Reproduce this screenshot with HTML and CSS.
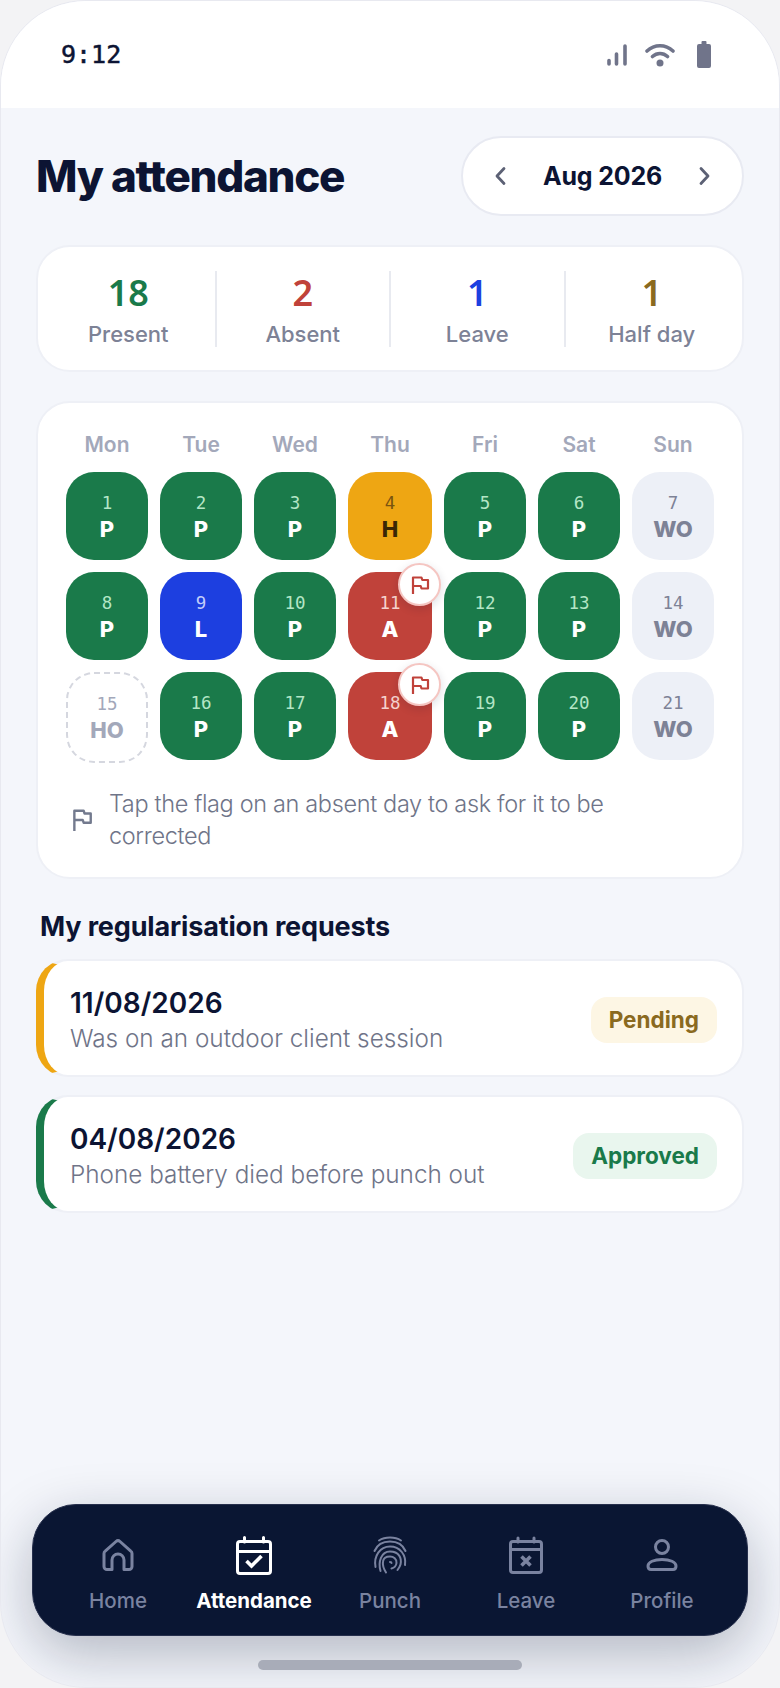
FILE: index.html
```html
<!DOCTYPE html>
<html lang="en">
<head>
    <meta charset="UTF-8">
    <meta name="viewport" content="width=device-width, initial-scale=1.0">
    <title>My attendance</title>
    <link rel="stylesheet" href="styles.css">
</head>
<body>
<div class="phone">
    <div class="status">
        <span class="time">9:12</span>
        <div class="status-icons">
            <svg class="ic-signal" width="20" height="22" viewBox="0 0 20 22"><path d="M2 16.500v3.500M9.500 10v10M18 2v18" stroke="#70748a" stroke-width="3.600" stroke-linecap="round" fill="none"/></svg>
            <svg class="ic-wifi" width="30" height="24" viewBox="0 0 30 24"><path d="M2 8C9.500 1 20.500 1 28 8M7.500 13.500C12 9.500 18 9.500 22.500 13.500" stroke="#70748a" stroke-width="3.600" stroke-linecap="round" fill="none"/><circle cx="15" cy="20" r="3.500" fill="#70748a"/></svg>
            <svg width="14" height="27" viewBox="0 0 14 27"><path d="M4.500 1a1 1 0 0 1 1-1h3a1 1 0 0 1 1 1v2H12a2 2 0 0 1 2 2v20a2 2 0 0 1-2 2H2a2 2 0 0 1-2-2V5a2 2 0 0 1 2-2h2.500z" fill="#70748a"/></svg>
        </div>
    </div>

    <main class="content">
        <header class="top">
            <h1>My attendance</h1>
            <div class="month">
                <svg width="16" height="22" viewBox="0 0 16 22"><path d="M12 3.500 5 11l7 7.500" stroke="#5c6175" stroke-width="2.800" stroke-linecap="round" stroke-linejoin="round" fill="none"/></svg>
                <span>Aug 2026</span>
                <svg width="16" height="22" viewBox="0 0 16 22"><path d="m4 3.500 7 7.500-7 7.500" stroke="#5c6175" stroke-width="2.800" stroke-linecap="round" stroke-linejoin="round" fill="none"/></svg>
            </div>
        </header>

        <section class="card summary">
            <div class="stat"><b class="green">18</b><span>Present</span></div>
            <div class="stat"><b class="red">2</b><span>Absent</span></div>
            <div class="stat"><b class="blue">1</b><span>Leave</span></div>
            <div class="stat"><b class="brown">1</b><span>Half day</span></div>
        </section>

        <section class="card calendar">
            <div class="grid">
                <div class="dow">Mon</div><div class="dow">Tue</div><div class="dow">Wed</div><div class="dow">Thu</div><div class="dow">Fri</div><div class="dow">Sat</div><div class="dow">Sun</div>

                <div class="day present"><small>1</small><b>P</b></div>
                <div class="day present"><small>2</small><b>P</b></div>
                <div class="day present"><small>3</small><b>P</b></div>
                <div class="day half"><small>4</small><b>H</b></div>
                <div class="day present"><small>5</small><b>P</b></div>
                <div class="day present"><small>6</small><b>P</b></div>
                <div class="day off"><small>7</small><b>WO</b></div>

                <div class="day present"><small>8</small><b>P</b></div>
                <div class="day leave"><small>9</small><b>L</b></div>
                <div class="day present"><small>10</small><b>P</b></div>
                <div class="day absent"><small>11</small><b>A</b>
                    <span class="flag"><svg width="20" height="20" viewBox="0 0 20 20"><path d="M3 19V2.500h8.500l.8 2.500H18v8.500h-6.500l-.8-2.500H3" stroke="#c0423a" stroke-width="2.200" fill="none" stroke-linejoin="round"/></svg></span>
                </div>
                <div class="day present"><small>12</small><b>P</b></div>
                <div class="day present"><small>13</small><b>P</b></div>
                <div class="day off"><small>14</small><b>WO</b></div>

                <div class="day holiday"><small>15</small><b>HO</b></div>
                <div class="day present"><small>16</small><b>P</b></div>
                <div class="day present"><small>17</small><b>P</b></div>
                <div class="day absent"><small>18</small><b>A</b>
                    <span class="flag"><svg width="20" height="20" viewBox="0 0 20 20"><path d="M3 19V2.500h8.500l.8 2.500H18v8.500h-6.500l-.8-2.500H3" stroke="#c0423a" stroke-width="2.200" fill="none" stroke-linejoin="round"/></svg></span>
                </div>
                <div class="day present"><small>19</small><b>P</b></div>
                <div class="day present"><small>20</small><b>P</b></div>
                <div class="day off"><small>21</small><b>WO</b></div>
            </div>
            <div class="hint">
                <svg width="22" height="24" viewBox="0 0 20 22"><path d="M3 21V2.500h8.500l.8 2.500H18v8.500h-6.500l-.8-2.500H3" stroke="#737a8e" stroke-width="2.200" fill="none" stroke-linejoin="round"/></svg>
                <p>Tap the flag on an absent day to ask for it to be corrected</p>
            </div>
        </section>

        <h2>My regularisation requests</h2>

        <div class="request pending">
            <div class="req-text"><b>11/08/2026</b><span>Was on an outdoor client session</span></div>
            <span class="tag">Pending</span>
        </div>
        <div class="request approved">
            <div class="req-text"><b>04/08/2026</b><span>Phone battery died before punch out</span></div>
            <span class="tag">Approved</span>
        </div>
    </main>

    <nav class="nav">
        <div class="nav-item">
            <svg width="40" height="40" viewBox="0 0 40 40"><path d="M6 31.500V18.500a3 3 0 0 1 1.200-2.400L18 6.500a3 3 0 0 1 4 0l10.800 9.600a3 3 0 0 1 1.200 2.400v13a3 3 0 0 1-3 3h-5V25a6 6 0 0 0-12 0v9.500H9a3 3 0 0 1-3-3z" stroke="#7a83a0" stroke-width="3" stroke-linejoin="round" fill="none"/></svg>
            <span>Home</span>
        </div>
        <div class="nav-item active">
            <svg width="40" height="40" viewBox="0 0 40 40"><rect x="3.500" y="6.500" width="33" height="32" rx="2.500" stroke="#fff" stroke-width="3" fill="none"/><path d="M3.500 16.500h33M10.500 2.500V7M29.500 2.500V7" stroke="#fff" stroke-width="3" stroke-linecap="round"/><path d="m12.500 26 5 5 10-10" stroke="#fff" stroke-width="3.600" fill="none"/></svg>
            <span>Attendance</span>
        </div>
        <div class="nav-item">
            <svg width="40" height="40" viewBox="0 0 40 40" fill="none" stroke="#7a83a0" stroke-width="2" stroke-linecap="round"><path d="M9 5.500C15 1.500 25 1.500 31 5.500"/><path d="M4.500 16C7 10 13 6.500 20 6.500S33 10 35.500 16"/><path d="M5.500 32C3.500 21 10 11.500 20 11.500S36.500 20 35 30"/><path d="M10.500 36C8 27 11 16.500 20 16.500S32 23 30.500 29.500c-.5 2-1.500 3.500-3 5.500"/><path d="M16 37.500c-2.500-4-3.500-8-3-11 .5-3.500 3.500-5 7-5s7 2.500 6.500 6.500-2.500 5-5 5.500"/><path d="M20 27c.5 0 1.500.5 1.500 1"/></svg>
            <span>Punch</span>
        </div>
        <div class="nav-item">
            <svg width="40" height="40" viewBox="0 0 40 40"><rect x="4.500" y="6.500" width="31" height="31" rx="2.500" stroke="#7a83a0" stroke-width="3" fill="none"/><path d="M4.500 14.500h31M12 3V7M28 3V7" stroke="#7a83a0" stroke-width="3" stroke-linecap="round"/><path d="m15.500 21.500 9 9M24.500 21.500l-9 9" stroke="#7a83a0" stroke-width="3.600"/></svg>
            <span>Leave</span>
        </div>
        <div class="nav-item">
            <svg width="40" height="40" viewBox="0 0 40 40" fill="none" stroke="#7a83a0" stroke-width="3"><circle cx="20" cy="12" r="6.500"/><path d="M6 31c0-4 6-6.500 14-6.500s14 2.500 14 6.500c0 2-1 3.500-3 3.500H9c-2 0-3-1.500-3-3.500z"/></svg>
            <span>Profile</span>
        </div>
    </nav>
    <div class="home-bar"></div>
</div>
</body>
</html>
```
FILE: styles.css
```css
* {
    margin: 0;
    padding: 0;
    box-sizing: border-box;
}

body {
    width: 780px;
    height: 1688px;
    background: #f3f3f5;
    font-family: "Inter", "Liberation Sans", sans-serif;
    overflow: hidden;
}

.phone {
    width: 780px;
    height: 1688px;
    display: flex;
    flex-direction: column;
    background: #f4f6fb;
    border: 1px solid #e8e9f0;
    border-radius: 86px;
    overflow: hidden;
}

.status {
    height: 107px;
    flex: none;
    display: flex;
    justify-content: space-between;
    align-items: center;
    background: #fff;
    padding: 0 68px 0 60px;
}

.time {
    font-family: "DejaVu Sans Mono", "Liberation Mono", monospace;
    font-size: 25px;
    -webkit-text-stroke: 0.5px #0c1433;
    color: #0c1433;
}

.status-icons {
    display: flex;
    align-items: center;
}

.ic-signal { margin-right: 18px; }
.ic-wifi { margin-right: 22px; }

.content {
    flex: 1;
    padding: 28px 35px 0 35px;
}

.top {
    display: flex;
    justify-content: space-between;
    align-items: center;
    margin-bottom: 29px;
}

h1 {
    font-size: 44px;
    font-weight: 800;
    letter-spacing: -1.3px;
    color: #0c1433;
}

.month {
    width: 283px;
    height: 80px;
    display: flex;
    align-items: center;
    justify-content: space-between;
    padding: 0 29px;
    background: #fff;
    border: 2px solid #e8eaf2;
    border-radius: 40px;
    font-size: 25px;
    font-weight: 700;
    letter-spacing: -0.2px;
    color: #0c1433;
}

.card {
    background: #fff;
    border: 2px solid #eef0f6;
    border-radius: 34px;
}

.summary {
    height: 127px;
    display: flex;
    align-items: center;
    padding: 0 4px;
    margin-bottom: 29px;
}

.stat {
    flex: 1;
    height: 76px;
    display: flex;
    flex-direction: column;
    align-items: center;
    border-right: 2px solid #e8eaf0;
}

.stat:last-child {
    border-right: 0;
}

.stat b {
    font-family: "Noto Sans", sans-serif;
    font-size: 36px;
    line-height: 44px;
    font-weight: 600;
}

.stat span {
    font-size: 22px;
    line-height: 38px;
    font-weight: 500;
    color: #7d8296;
}

.green { color: #1a7a4a; }
.red { color: #c0423a; }
.blue { color: #1d3fe0; }
.brown { color: #8a6a1f; }

.calendar {
    height: 478px;
    padding: 25px 28px 0 28px;
    margin-bottom: 32px;
}

.grid {
    display: grid;
    grid-template-columns: repeat(3, 82px) 84px repeat(3, 82px);
    align-items: start;
    gap: 12px;
}

.dow {
    text-align: center;
    font-size: 21px;
    line-height: 30px;
    padding-top: 2px;
    font-weight: 600;
    color: #a3a8ba;
}

.day {
    position: relative;
    height: 88px;
    display: flex;
    flex-direction: column;
    align-items: center;
    justify-content: center;
    border-radius: 28px;
}

.day small {
    font-family: "DejaVu Sans Mono", "Liberation Mono", monospace;
    font-size: 17.5px;
    line-height: 24px;
}

.day b {
    font-size: 22px;
    line-height: 26px;
    font-weight: 800;
    margin-top: 1px;
}

.present { background: #1a7a4a; color: #fff; }
.present small { color: #b4e6c6; }
.half { background: #eea613; color: #3a2605; }
.half small { color: #7a5410; }
.leave { background: #1d3fe0; color: #fff; }
.leave small { color: #c3cefa; }
.absent { background: #c0423a; color: #fff; }
.absent small { color: #f6d2ce; }
.off { background: #edf0f7; color: #7d8296; }
.holiday { height: 91px; border: 2px dashed #d5d7df; color: #a3a8ba; }

.flag {
    position: absolute;
    top: -9px;
    right: -9px;
    width: 43px;
    height: 43px;
    display: flex;
    align-items: center;
    justify-content: center;
    background: #fff;
    border: 2px solid #f5c6c2;
    border-radius: 50%;
    box-shadow: 0 3px 10px rgba(12, 20, 51, 0.14);
}

.hint {
    display: flex;
    align-items: center;
    gap: 16px;
    margin: 25px 0 0 5px;
}

.hint p {
    max-width: 530px;
    font-size: 23.5px;
    line-height: 32px;
    font-weight: 300;
    letter-spacing: -0.35px;
    color: #6f7488;
}

h2 {
    font-size: 27px;
    line-height: 32px;
    font-weight: 700;
    letter-spacing: -0.15px;
    color: #0c1433;
    margin: 0 0 16px 4px;
}

.request {
    height: 118px;
    display: flex;
    align-items: center;
    justify-content: space-between;
    padding: 0 25px 0 26px;
    margin-bottom: 18px;
    background: #fff;
    border: 2px solid #eef0f6;
    border-left-width: 8px;
    border-radius: 32px;
}

.pending { border-left-color: #eea613; }
.approved { border-left-color: #1a7a4a; }

.req-text {
    display: flex;
    flex-direction: column;
    padding-top: 5px;
}

.req-text b {
    font-size: 28px;
    line-height: 35px;
    font-weight: 600;
    color: #0c1433;
}

.req-text span {
    font-size: 24.3px;
    line-height: 35px;
    font-weight: 300;
    color: #6f7488;
}

.tag {
    padding: 0 18px;
    height: 46px;
    line-height: 46px;
    margin-top: 3px;
    border-radius: 16px;
    font-size: 22.5px;
    font-weight: 700;
}

.pending .tag { background: #fdf6e4; color: #8a6a1f; }
.approved .tag { background: #e9f6ee; color: #1a7a4a; }

.nav {
    flex: none;
    width: 716px;
    height: 132px;
    margin: 0 0 0 31px;
    display: flex;
    align-items: center;
    padding: 10px 17px 0;
    background: #0a1633;
    border: 1px solid #262f4c;
    border-radius: 44px;
    box-shadow: 0 18px 56px rgba(12, 20, 51, 0.28);
}

.nav-item {
    flex: 1;
    display: flex;
    flex-direction: column;
    align-items: center;
    gap: 12px;
    font-size: 20.5px;
    line-height: 28px;
    font-weight: 500;
    color: #7a83a0;
}

.nav-item.active {
    color: #fff;
    font-weight: 700;
}

.home-bar {
    flex: none;
    width: 264px;
    height: 10px;
    margin: 24px auto 17px;
    background: #a8acb8;
    border-radius: 5px;
}
```
